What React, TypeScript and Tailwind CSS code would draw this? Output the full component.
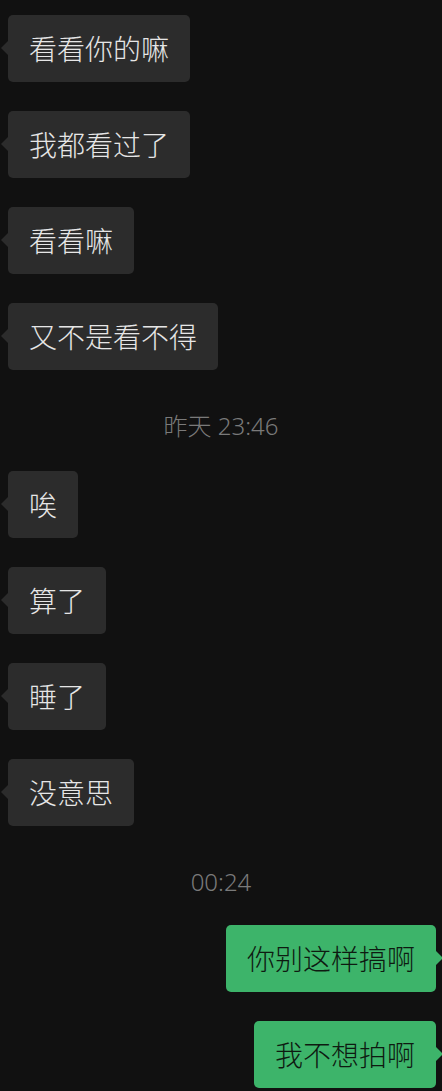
type Msg =
  | { kind: 'in'; text: string }
  | { kind: 'out'; text: string }
  | { kind: 'time'; text: string; className: string }

const messages: Msg[] = [
  { kind: 'in', text: '看看你的嘛' },
  { kind: 'in', text: '我都看过了' },
  { kind: 'in', text: '看看嘛' },
  { kind: 'in', text: '又不是看不得' },
  { kind: 'time', text: '昨天 23:46', className: 'mt-[13px] mb-[2px]' },
  { kind: 'in', text: '唉' },
  { kind: 'in', text: '算了' },
  { kind: 'in', text: '睡了' },
  { kind: 'in', text: '没意思' },
  { kind: 'time', text: '00:24', className: 'mt-[13px] mb-[0px]' },
  { kind: 'out', text: '你别这样搞啊' },
  { kind: 'out', text: '我不想拍啊' },
]

function Bubble({ msg }: { msg: Msg }) {
  if (msg.kind === 'time') {
    return (
      <div className={`flex h-[28px] items-center justify-center text-[24px] font-light text-[#7a7a7a] ${msg.className}`}>
        {msg.text}
      </div>
    )
  }
  const out = msg.kind === 'out'
  return (
    <div className={out ? 'flex justify-end pr-[6px]' : 'flex justify-start pl-[8px]'}>
      <div
        className={
          out
            ? 'relative flex h-[67px] items-center rounded-[5px] bg-[#3db46a] px-[21px] text-[28px] font-light text-[#0e1a11]'
            : 'relative flex h-[67px] items-center rounded-[5px] bg-[#2c2c2c] px-[21px] text-[28px] font-light text-[#e6e6e6]'
        }
      >
        {out ? (
          <span className="absolute right-[-7px] top-[26px] h-0 w-0 border-y-[7px] border-l-[7px] border-y-transparent border-l-[#3db46a]" />
        ) : (
          <span className="absolute left-[-7px] top-[26px] h-0 w-0 border-y-[7px] border-r-[7px] border-y-transparent border-r-[#2c2c2c]" />
        )}
        <span className="leading-none">{msg.text}</span>
      </div>
    </div>
  )
}

export default function App() {
  return (
    <div
      className="h-[1091px] w-[442px] overflow-hidden bg-[#111111] pt-[15px]"
      style={{ fontFamily: '"Noto Sans", "Noto Sans CJK SC", sans-serif' }}
    >
      <div className="flex flex-col gap-[29px]">
        {messages.map((m, i) => (
          <Bubble key={i} msg={m} />
        ))}
      </div>
    </div>
  )
}
